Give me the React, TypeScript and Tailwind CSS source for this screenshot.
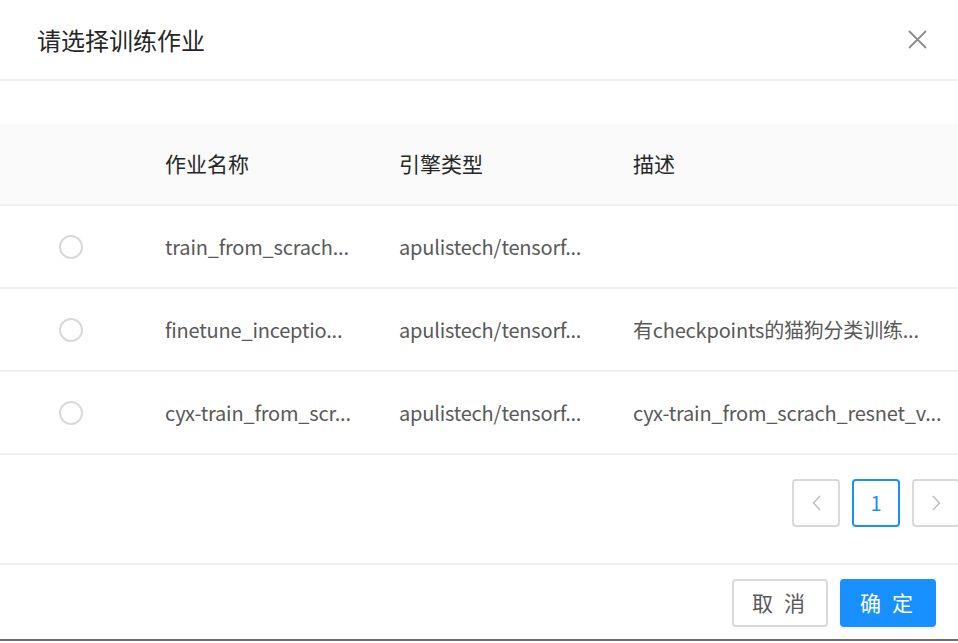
import React from 'react';

const rows = [
  { name: 'train_from_scrach...', engine: 'apulistech/tensorf...', desc: '' },
  { name: 'finetune_inceptio...', engine: 'apulistech/tensorf...', desc: '有checkpoints的猫狗分类训练...' },
  { name: 'cyx-train_from_scr...', engine: 'apulistech/tensorf...', desc: 'cyx-train_from_scrach_resnet_v...' },
];

const font = { fontFamily: '"Noto Sans CJK SC", "Noto Sans", sans-serif' };

function Chevron({ dir }: { dir: 'left' | 'right' }) {
  return (
    <svg width="9" height="16" viewBox="0 0 9 16" fill="none" stroke="#bfbfbf" strokeWidth="1.5">
      {dir === 'left' ? <path d="M8 1 L1.5 8 L8 15" /> : <path d="M1 1 L7.5 8 L1 15" />}
    </svg>
  );
}

export default function App() {
  return (
    <div className="w-[958px] h-[643px] overflow-hidden bg-white flex flex-col" style={font}>
      {/* Header */}
      <div className="h-[81px] shrink-0 border-b-2 border-[#f0f0f0] flex items-center justify-between pl-[37px] pr-[31px]">
        <span className="text-[24px] leading-none text-[#262626]">请选择训练作业</span>
        <svg width="19" height="19" viewBox="0 0 19 19" stroke="#8c8c8c" strokeWidth="1.8" fill="none">
          <path d="M1 1 L18 18 M18 1 L1 18" />
        </svg>
      </div>

      {/* Body */}
      <div className="pt-[43px] shrink-0">
        <div className="grid grid-cols-[141px_234px_234px_1fr] h-[82px] bg-[#fafafa] border-b-2 border-[#f0f0f0] items-center text-[21px] text-[#262626]">
          <div />
          <div className="pl-[24px]">作业名称</div>
          <div className="pl-[24px]">引擎类型</div>
          <div className="pl-[24px]">描述</div>
        </div>
        {rows.map((r, i) => (
          <div
            key={i}
            className="grid grid-cols-[141px_234px_234px_1fr] h-[83px] border-b-2 border-[#f0f0f0] items-center text-[20px] tracking-[-0.2px] text-[#595959] whitespace-nowrap"
          >
            <div className="flex justify-center">
              <span className="w-[24px] h-[24px] rounded-full border-2 border-[#d9d9d9] bg-white" />
            </div>
            <div className="pl-[24px]">{r.name}</div>
            <div className="pl-[24px]">{r.engine}</div>
            <div className="pl-[24px]">{r.desc}</div>
          </div>
        ))}

        {/* Pagination */}
        <div className="flex justify-end gap-[12px] mt-[24px] mb-[36px] mr-[-2px]">
          <button className="w-[48px] h-[48px] rounded-[4px] border-2 border-[#d9d9d9] flex items-center justify-center">
            <Chevron dir="left" />
          </button>
          <button className="w-[48px] h-[48px] rounded-[4px] border-2 border-[#1890ff] text-[#1890ff] text-[20px] flex items-center justify-center">
            1
          </button>
          <button className="w-[48px] h-[48px] rounded-[4px] border-2 border-[#d9d9d9] flex items-center justify-center">
            <Chevron dir="right" />
          </button>
        </div>
      </div>

      {/* Footer */}
      <div className="h-[78px] shrink-0 border-t-2 border-b-2 border-t-[#f0f0f0] border-b-[#6e6e6e] flex justify-end items-start pt-[14px] pr-[22px] gap-[12px]">
        <button className="w-[96px] h-[48px] rounded-[4px] border-2 border-[#d9d9d9] bg-white text-[21px] text-[#595959] tracking-[0.15em] shadow-[0_2px_0_rgba(0,0,0,0.015)]">
          取 消
        </button>
        <button className="w-[96px] h-[48px] rounded-[4px] bg-[#1890ff] text-[21px] text-white tracking-[0.15em] shadow-[0_2px_0_rgba(0,0,0,0.045)]">
          确 定
        </button>
      </div>
    </div>
  );
}
